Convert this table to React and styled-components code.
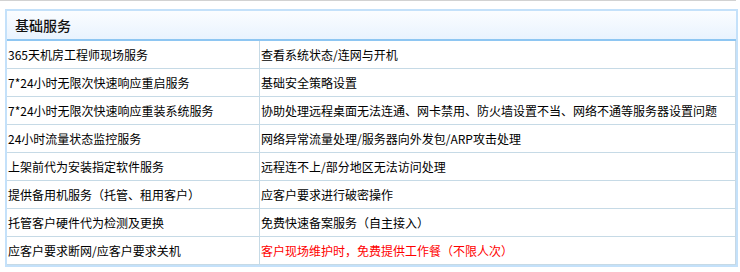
import styled, { createGlobalStyle } from "styled-components";

const GlobalStyle = createGlobalStyle`
  body {
    margin: 0;
    background: #fff;
    font-family: "SimSun", "Noto Sans CJK SC", "Liberation Sans", sans-serif;
  }
`

const TopRule = styled.div`
  width: 736px;
  height: 1px;
  background-color: #d2d2d2;
`

const Panel = styled.div`
  margin: 8px 0 0 5px;
  width: 729px;
  border: 2px solid #c4e1fa;
`

const PanelHead = styled.div`
  height: 28px;
  display: flex;
  align-items: center;
  padding-left: 8px;
  background: linear-gradient(#fbfdff, #e9f3fe);
  border-bottom: 2px solid #8ec6f2;
  font-size: 14px;
  font-weight: 500;
  color: #111;
`

const Grid = styled.div`
  display: grid;
  grid-template-columns: 253px 1fr;
  border-right: 1px solid #c8d8e4;
`

const Cell = styled.div`
  height: 27px;
  display: flex;
  align-items: center;
  padding-left: 1px;
  font-size: 12px;
  color: ${(props) => (props.$red ? "#ff0000" : "#000")};
  border-bottom: 1px solid #c6dae6;
  border-right: ${(props) => (props.$first ? "1px solid #c6dae6" : "0")};
  white-space: nowrap;
`

const services = [
  ["365天机房工程师现场服务", "查看系统状态/连网与开机"],
  ["7*24小时无限次快速响应重启服务", "基础安全策略设置"],
  ["7*24小时无限次快速响应重装系统服务", "协助处理远程桌面无法连通、网卡禁用、防火墙设置不当、网络不通等服务器设置问题"],
  ["24小时流量状态监控服务", "网络异常流量处理/服务器向外发包/ARP攻击处理"],
  ["上架前代为安装指定软件服务", "远程连不上/部分地区无法访问处理"],
  ["提供备用机服务（托管、租用客户）", "应客户要求进行破密操作"],
  ["托管客户硬件代为检测及更换", "免费快速备案服务（自主接入）"],
  ["应客户要求断网/应客户要求关机", "客户现场维护时，免费提供工作餐（不限人次）", true],
]

function App() {
  return (
    <>
      <GlobalStyle />
      <TopRule />
      <Panel>
        <PanelHead>基础服务</PanelHead>
        <Grid>
          {services.map(([left, right, red]) => [
            <Cell key={left} $first>{left}</Cell>,
            <Cell key={right} $red={red}>{right}</Cell>,
          ])}
        </Grid>
      </Panel>
    </>
  )
}

export default App;
